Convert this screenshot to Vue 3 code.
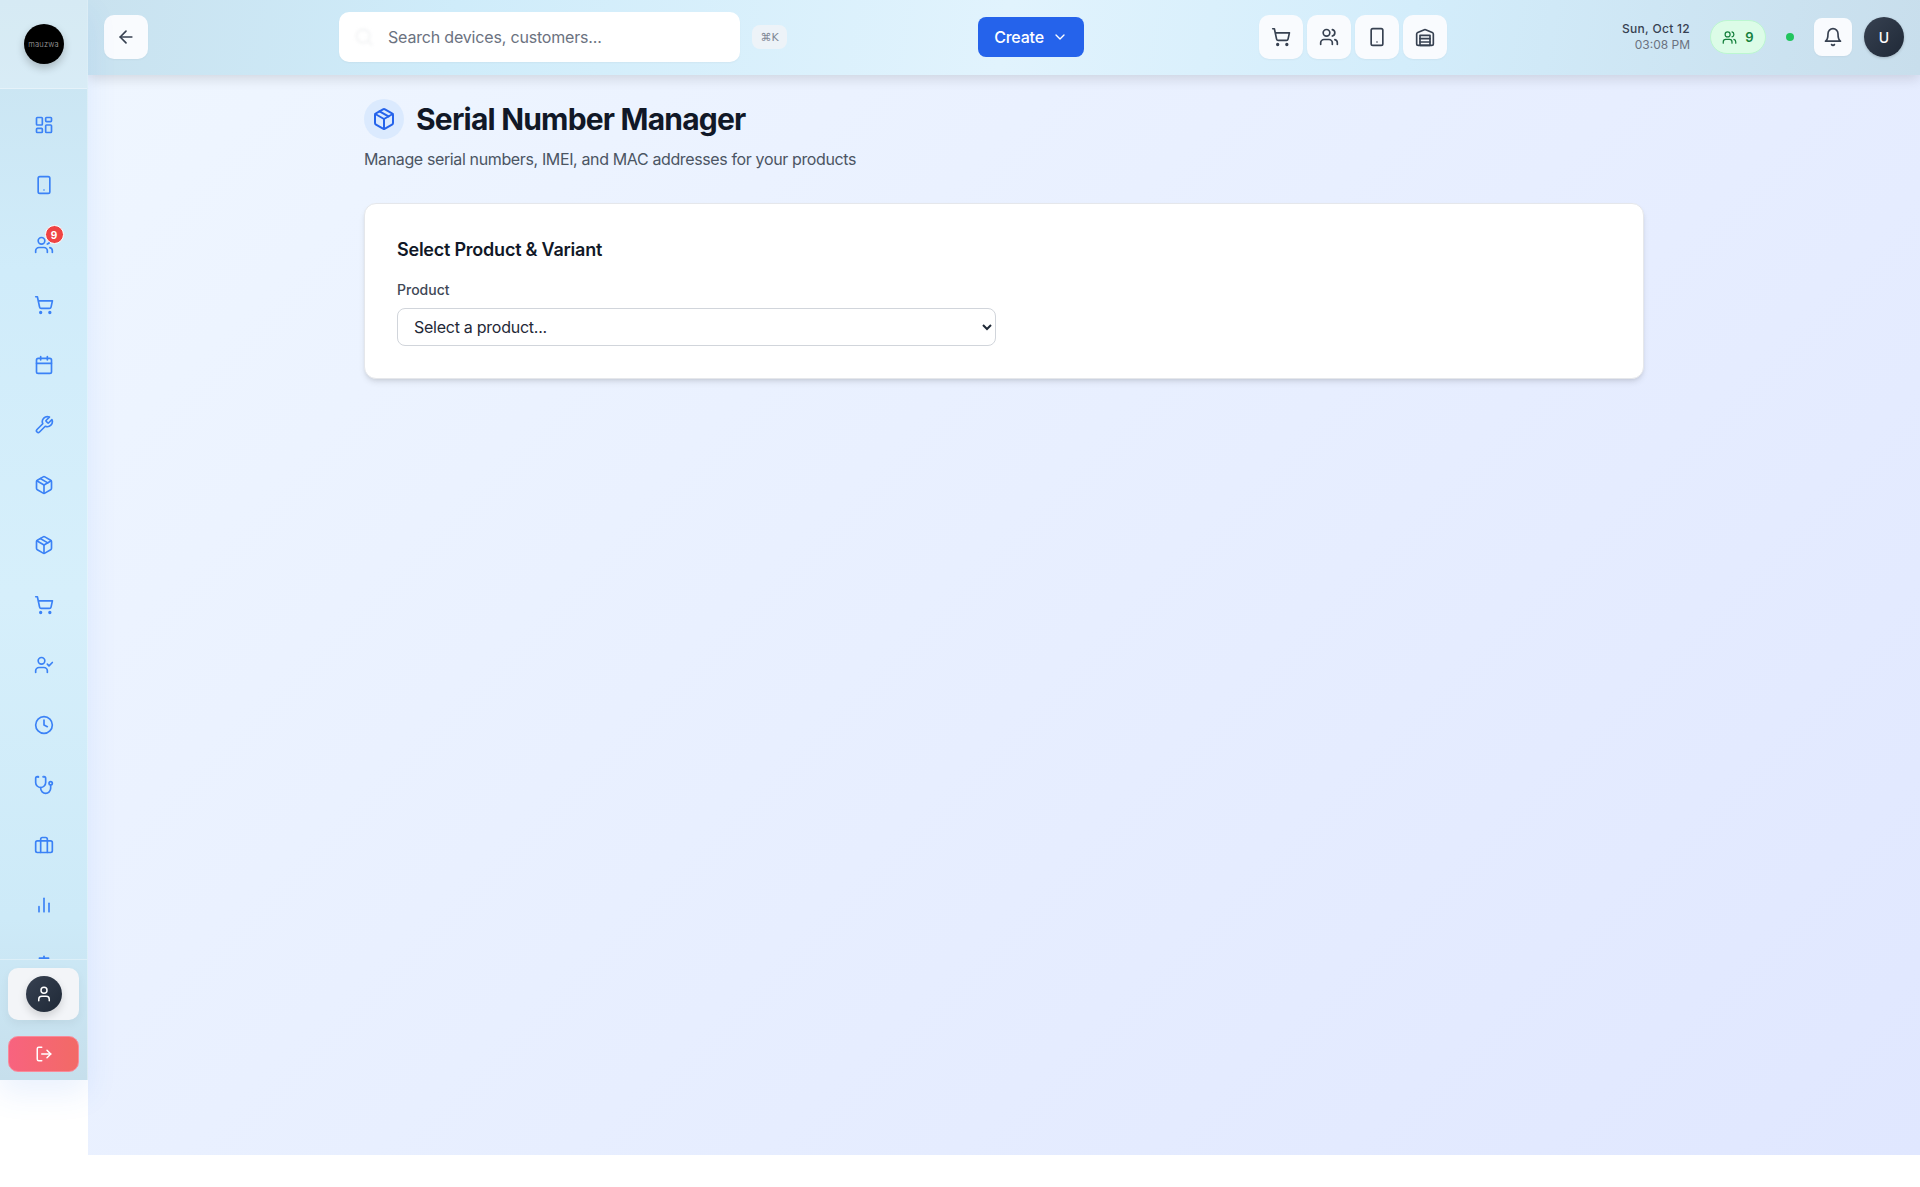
<template>
  <div class="app">
    <aside class="sidebar">
      <div class="side-top">
        <div class="logo"><span>mauzwa</span></div>
      </div>
      <nav class="side-nav">
        <a v-for="item in navItems" :key="item.id" class="nav-item">
          <svg class="nav-icon" viewBox="0 0 24 24" v-html="icons[item.icon]"></svg>
          <span v-if="item.badge" class="nav-badge">{{ item.badge }}</span>
        </a>
      </nav>
      <div class="side-bottom">
        <div class="profile-card">
          <div class="profile-avatar">
            <svg class="profile-icon" viewBox="0 0 24 24" v-html="icons.user"></svg>
          </div>
        </div>
        <button class="logout-btn">
          <svg class="logout-icon" viewBox="0 0 24 24" v-html="icons.logout"></svg>
        </button>
      </div>
    </aside>

    <div class="content">
      <header class="topbar">
        <button class="tile back-btn">
          <svg class="tile-icon" viewBox="0 0 24 24" v-html="icons.back"></svg>
        </button>

        <div class="search-wrap">
          <div class="search-box">
            <svg class="search-icon" viewBox="0 0 24 24" v-html="icons.search"></svg>
            <span class="search-text">Search devices, customers...</span>
          </div>
          <kbd class="shortcut">⌘K</kbd>
        </div>

        <button class="create-btn">
          Create
          <svg class="chevron" viewBox="0 0 24 24" v-html="icons.chevron"></svg>
        </button>

        <div class="quick-actions">
          <button v-for="name in quickActions" :key="name" class="tile">
            <svg class="tile-icon" viewBox="0 0 24 24" v-html="icons[name]"></svg>
          </button>
        </div>

        <div class="top-right">
          <div class="clock">
            <div class="clock-date">Sun, Oct 12</div>
            <div class="clock-time">03:08 PM</div>
          </div>
          <div class="online-pill">
            <svg class="pill-icon" viewBox="0 0 24 24" v-html="icons.users"></svg>
            <span>9</span>
          </div>
          <span class="status-dot"></span>
          <button class="bell-btn">
            <svg class="tile-icon" viewBox="0 0 24 24" v-html="icons.bell"></svg>
          </button>
          <div class="user-avatar">U</div>
        </div>
      </header>

      <main class="main">
        <div class="page">
          <div class="page-head">
            <div class="head-icon">
              <svg viewBox="0 0 24 24" v-html="icons.package"></svg>
            </div>
            <h1>Serial Number Manager</h1>
          </div>
          <p class="page-sub">Manage serial numbers, IMEI, and MAC addresses for your products</p>

          <section class="card">
            <h2>Select Product &amp; Variant</h2>
            <div class="form-grid">
              <div class="field">
                <label for="product">Product</label>
                <select id="product">
                  <option>Select a product...</option>
                </select>
              </div>
            </div>
          </section>
        </div>
      </main>
    </div>
  </div>
</template>

<script setup>
// lucide style icons, drawn as svg children
const icons = {
  dashboard: '<rect x="3" y="3" width="7" height="9" rx="1"/><rect x="14" y="3" width="7" height="5" rx="1"/><rect x="14" y="12" width="7" height="9" rx="1"/><rect x="3" y="16" width="7" height="5" rx="1"/>',
  phone: '<rect x="5" y="2" width="14" height="20" rx="2"/><path d="M12 18h.01"/>',
  users: '<path d="M16 21v-2a4 4 0 0 0-4-4H6a4 4 0 0 0-4 4v2"/><circle cx="9" cy="7" r="4"/><path d="M22 21v-2a4 4 0 0 0-3-3.87"/><path d="M16 3.13a4 4 0 0 1 0 7.75"/>',
  cart: '<circle cx="8" cy="21" r="1"/><circle cx="19" cy="21" r="1"/><path d="M2.05 2.05h2l2.66 12.42a2 2 0 0 0 2 1.58h9.78a2 2 0 0 0 1.95-1.57l1.65-7.43H5.12"/>',
  calendar: '<path d="M8 2v4"/><path d="M16 2v4"/><rect x="3" y="4" width="18" height="18" rx="2"/><path d="M3 10h18"/>',
  wrench: '<path d="M14.7 6.3a1 1 0 0 0 0 1.4l1.6 1.6a1 1 0 0 0 1.4 0l3.77-3.77a6 6 0 0 1-7.94 7.94l-6.91 6.91a2.12 2.12 0 0 1-3-3l6.91-6.91a6 6 0 0 1 7.94-7.94l-3.76 3.76z"/>',
  package: '<path d="m7.5 4.27 9 5.15"/><path d="M21 8a2 2 0 0 0-1-1.73l-7-4a2 2 0 0 0-2 0l-7 4A2 2 0 0 0 3 8v8a2 2 0 0 0 1 1.73l7 4a2 2 0 0 0 2 0l7-4A2 2 0 0 0 21 16Z"/><path d="m3.3 7 8.7 5 8.7-5"/><path d="M12 22V12"/>',
  userCheck: '<path d="M16 21v-2a4 4 0 0 0-4-4H6a4 4 0 0 0-4 4v2"/><circle cx="9" cy="7" r="4"/><polyline points="16 11 18 13 22 9"/>',
  clock: '<circle cx="12" cy="12" r="10"/><polyline points="12 6 12 12 16 14"/>',
  stethoscope: '<path d="M4.8 2.3A.3.3 0 1 0 5 2H4a2 2 0 0 0-2 2v5a6 6 0 0 0 6 6v0a6 6 0 0 0 6-6V4a2 2 0 0 0-2-2h-1a.2.2 0 1 0 .3.3"/><path d="M8 15v1a6 6 0 0 0 6 6v0a6 6 0 0 0 6-6v-4"/><circle cx="20" cy="10" r="2"/>',
  briefcase: '<rect x="2" y="7" width="20" height="14" rx="2"/><path d="M16 21V5a2 2 0 0 0-2-2h-4a2 2 0 0 0-2 2v16"/>',
  chart: '<path d="M18 20V10"/><path d="M12 20V4"/><path d="M6 20v-6"/>',
  // only the top of this one shows, the nav clips the rest
  settings: '<path d="M12 1.5v3"/><path d="M6.5 3.8h11"/><circle cx="12" cy="12" r="7"/><circle cx="12" cy="12" r="3"/>',
  user: '<path d="M19 21v-2a4 4 0 0 0-4-4H9a4 4 0 0 0-4 4v2"/><circle cx="12" cy="7" r="4"/>',
  logout: '<path d="M9 21H5a2 2 0 0 1-2-2V5a2 2 0 0 1 2-2h4"/><polyline points="16 17 21 12 16 7"/><line x1="21" y1="12" x2="9" y2="12"/>',
  back: '<path d="m12 19-7-7 7-7"/><path d="M19 12H5"/>',
  search: '<circle cx="11" cy="11" r="8"/><path d="m21 21-4.3-4.3"/>',
  chevron: '<path d="m6 9 6 6 6-6"/>',
  warehouse: '<path d="M22 8.35V20a2 2 0 0 1-2 2H4a2 2 0 0 1-2-2V8.35A2 2 0 0 1 3.26 6.5l8-3.2a2 2 0 0 1 1.48 0l8 3.2A2 2 0 0 1 22 8.35Z"/><path d="M6 18h12"/><path d="M6 14h12"/><rect x="6" y="10" width="12" height="12"/>',
  bell: '<path d="M6 8a6 6 0 0 1 12 0c0 7 3 9 3 9H3s3-2 3-9"/><path d="M10.3 21a1.94 1.94 0 0 0 3.4 0"/>'
}

const navItems = [
  { id: 'dashboard', icon: 'dashboard' },
  { id: 'devices', icon: 'phone' },
  { id: 'customers', icon: 'users', badge: 9 },
  { id: 'sales', icon: 'cart' },
  { id: 'calendar', icon: 'calendar' },
  { id: 'repairs', icon: 'wrench' },
  { id: 'products', icon: 'package' },
  { id: 'serials', icon: 'package' },
  { id: 'purchases', icon: 'cart' },
  { id: 'staff', icon: 'userCheck' },
  { id: 'attendance', icon: 'clock' },
  { id: 'diagnostics', icon: 'stethoscope' },
  { id: 'business', icon: 'briefcase' },
  { id: 'reports', icon: 'chart' },
  { id: 'settings', icon: 'settings' }
]

const quickActions = ['cart', 'users', 'phone', 'warehouse']
</script>

<style>
body {
  background: #fff;
}
</style>

<style scoped>
.app {
  display: flex;
  height: 1155px;
  font-family: Inter, "Liberation Sans", sans-serif;
  color: #111827;
}

/* sidebar */
.sidebar {
  position: relative;
  z-index: 2;
  width: 88px;
  height: 1080px;
  flex-shrink: 0;
  display: flex;
  flex-direction: column;
  box-sizing: border-box;
  border-right: 1px solid rgba(255, 255, 255, 0.35);
  background: linear-gradient(180deg, #c9e3f0 0%, #d0ecfa 25%, #d6effb 55%, #cdeaf8 85%, #c6dfec 100%);
  box-shadow: 0 14px 30px rgba(59, 130, 246, 0.1);
}

.side-top {
  height: 88px;
  flex-shrink: 0;
  display: flex;
  align-items: center;
  justify-content: center;
  background: rgba(255, 255, 255, 0.25);
  border-bottom: 1px solid rgba(255, 255, 255, 0.35);
}

.logo {
  width: 40px;
  height: 40px;
  border-radius: 50%;
  background: #000;
  display: flex;
  align-items: center;
  justify-content: center;
  box-shadow: 0 4px 8px rgba(0, 0, 0, 0.22);
}

.logo span {
  font-size: 7.5px;
  font-weight: 300;
  color: #a8a8a8;
  letter-spacing: 0.2px;
}

.side-nav {
  flex: 1;
  min-height: 0;
  overflow: hidden;
  display: flex;
  flex-direction: column;
  align-items: center;
  padding-top: 6px;
}

.nav-item {
  position: relative;
  width: 60px;
  height: 60px;
  flex-shrink: 0;
  display: flex;
  align-items: center;
  justify-content: center;
}

.nav-icon {
  width: 20px;
  height: 20px;
  fill: none;
  stroke: #3b82f6;
  stroke-width: 2;
  stroke-linecap: round;
  stroke-linejoin: round;
}

.nav-badge {
  position: absolute;
  top: 10px;
  right: 10px;
  width: 19px;
  height: 19px;
  box-sizing: border-box;
  border-radius: 50%;
  border: 1px solid #fff;
  background: #ef4444;
  color: #fff;
  font-size: 10px;
  font-weight: 700;
  display: flex;
  align-items: center;
  justify-content: center;
}

.side-bottom {
  flex-shrink: 0;
  display: flex;
  flex-direction: column;
  gap: 16px;
  padding: 8px 8px 8px;
  border-top: 1px solid rgba(255, 255, 255, 0.35);
}

.profile-card {
  height: 52px;
  border-radius: 10px;
  background: #f3f5f8;
  display: flex;
  align-items: center;
  justify-content: center;
  box-shadow: 0 4px 10px rgba(0, 0, 0, 0.05);
}

.profile-avatar {
  width: 36px;
  height: 36px;
  border-radius: 50%;
  background: linear-gradient(135deg, #374151, #1f2937);
  display: flex;
  align-items: center;
  justify-content: center;
  box-shadow: 0 4px 8px rgba(0, 0, 0, 0.15);
}

.profile-icon,
.logout-icon {
  width: 18px;
  height: 18px;
  fill: none;
  stroke: #fff;
  stroke-width: 2;
  stroke-linecap: round;
  stroke-linejoin: round;
}

.logout-btn {
  height: 36px;
  padding: 0;
  border-radius: 10px;
  border: 1px solid #f98a9a;
  background: linear-gradient(90deg, #f8637f, #f26a66);
  display: flex;
  align-items: center;
  justify-content: center;
}

/* top bar */
.content {
  flex: 1;
  min-width: 0;
  display: flex;
  flex-direction: column;
}

.topbar {
  position: relative;
  z-index: 1;
  height: 75px;
  box-sizing: border-box;
  flex-shrink: 0;
  display: flex;
  align-items: center;
  padding: 0 16px 1px;
  background: linear-gradient(100deg, #c9e2ef 0%, #cfecfa 20%, #e1f3fd 50%, #d3edfb 72%, #c8deec 100%);
  box-shadow: 0 4px 12px rgba(0, 0, 0, 0.12);
}

.tile {
  width: 44px;
  height: 44px;
  padding: 0;
  border: none;
  border-radius: 10px;
  background: #f9fbfe;
  display: flex;
  align-items: center;
  justify-content: center;
  box-shadow: 0 1px 2px rgba(0, 0, 0, 0.04);
}

.tile-icon {
  width: 20px;
  height: 20px;
  fill: none;
  stroke: #374151;
  stroke-width: 2;
  stroke-linecap: round;
  stroke-linejoin: round;
}

.search-wrap {
  display: flex;
  align-items: center;
  gap: 12px;
  margin-left: 191px;
}

.search-box {
  width: 401px;
  height: 50px;
  box-sizing: border-box;
  padding-left: 15px;
  border-radius: 10px;
  background: #fff;
  display: flex;
  align-items: center;
  gap: 14px;
  box-shadow: 0 1px 2px rgba(0, 0, 0, 0.04);
}

.search-icon {
  width: 20px;
  height: 20px;
  fill: none;
  stroke: #f5f6f7;
  stroke-width: 3;
  stroke-linecap: round;
  filter: blur(1.5px);
}

.search-text {
  font-size: 16px;
  letter-spacing: -0.18px;
  color: #6b7280;
}

.shortcut {
  width: 35px;
  height: 24px;
  border-radius: 8px;
  background: #edf3f8;
  color: #808895;
  font-family: "DejaVu Sans", Inter, sans-serif;
  font-size: 11px;
  font-weight: 400;
  display: flex;
  align-items: center;
  justify-content: center;
}

.create-btn {
  margin-left: 191px;
  width: 106px;
  height: 40px;
  padding: 0;
  border: none;
  border-radius: 8px;
  background: #2563eb;
  color: #fff;
  font-family: inherit;
  font-size: 16px;
  font-weight: 500;
  letter-spacing: -0.2px;
  display: flex;
  align-items: center;
  justify-content: center;
  gap: 8px;
}

.chevron {
  width: 16px;
  height: 16px;
  fill: none;
  stroke: #fff;
  stroke-width: 2;
  stroke-linecap: round;
  stroke-linejoin: round;
}

.quick-actions {
  display: flex;
  gap: 4px;
  margin-left: 175px;
}

.top-right {
  margin-left: auto;
  display: flex;
  align-items: center;
}

.clock {
  text-align: right;
  font-size: 12px;
  line-height: 16px;
  margin-right: 20px;
}

.clock-date {
  font-weight: 500;
  letter-spacing: 0.3px;
  color: #374151;
}

.clock-time {
  color: #6b7280;
}

.online-pill {
  width: 56px;
  height: 34px;
  box-sizing: border-box;
  border: 1px solid #bbf7d0;
  border-radius: 17px;
  background: #dcfce7;
  color: #15803d;
  font-size: 13px;
  font-weight: 600;
  display: flex;
  align-items: center;
  justify-content: center;
  gap: 8px;
}

.pill-icon {
  width: 15px;
  height: 15px;
  fill: none;
  stroke: #15803d;
  stroke-width: 2;
  stroke-linecap: round;
  stroke-linejoin: round;
}

.status-dot {
  width: 8px;
  height: 8px;
  border-radius: 50%;
  background: #22c55e;
  margin-left: 20px;
}

.bell-btn {
  width: 38px;
  height: 38px;
  margin-left: 20px;
  padding: 0;
  border: none;
  border-radius: 8px;
  background: #f9fbfe;
  display: flex;
  align-items: center;
  justify-content: center;
  box-shadow: 0 1px 2px rgba(0, 0, 0, 0.04);
}

.user-avatar {
  width: 40px;
  height: 40px;
  margin-left: 12px;
  border-radius: 50%;
  background: linear-gradient(135deg, #374151, #1f2937);
  color: #fff;
  font-size: 14px;
  font-weight: 500;
  display: flex;
  align-items: center;
  justify-content: center;
  box-shadow: 0 1px 3px rgba(0, 0, 0, 0.2);
}

/* page */
.main {
  flex: 1;
  background: linear-gradient(135deg, #eff6ff 0%, #e0e7ff 100%);
}

.page {
  max-width: 1280px;
  margin: 0 auto;
  padding-top: 24px;
}

.page-head {
  display: flex;
  align-items: center;
  gap: 12px;
}

.head-icon {
  width: 40px;
  height: 40px;
  border-radius: 50%;
  background: #dbeafe;
  display: flex;
  align-items: center;
  justify-content: center;
}

.head-icon svg {
  width: 24px;
  height: 24px;
  fill: none;
  stroke: #2563eb;
  stroke-width: 2;
  stroke-linecap: round;
  stroke-linejoin: round;
}

h1 {
  margin: 0;
  font-size: 30px;
  line-height: 36px;
  font-weight: 700;
  letter-spacing: -0.8px;
  color: #111827;
}

.page-sub {
  margin: 8px 0 0;
  font-size: 16px;
  line-height: 24px;
  letter-spacing: -0.37px;
  color: #4b5563;
}

.card {
  margin-top: 32px;
  padding: 32px;
  box-sizing: border-box;
  border: 1px solid #e5e7eb;
  border-radius: 12px;
  background: #fff;
  box-shadow: 0 4px 6px -1px rgba(0, 0, 0, 0.1), 0 2px 4px -2px rgba(0, 0, 0, 0.1);
}

h2 {
  margin: 0 0 16px;
  font-size: 18px;
  line-height: 28px;
  font-weight: 600;
  letter-spacing: -0.23px;
  color: #111827;
}

.form-grid {
  display: grid;
  grid-template-columns: 1fr 1fr;
  gap: 16px;
}

.field label {
  display: block;
  margin-bottom: 8px;
  font-size: 14px;
  line-height: 20px;
  font-weight: 500;
  color: #3f4856;
}

.field select {
  width: 100%;
  height: 38px;
  padding: 0 12px;
  border: 1px solid #d1d5db;
  border-radius: 8px;
  background: #fff;
  color: #1f2937;
  font-family: inherit;
  font-size: 16px;
  letter-spacing: -0.26px;
}
</style>
